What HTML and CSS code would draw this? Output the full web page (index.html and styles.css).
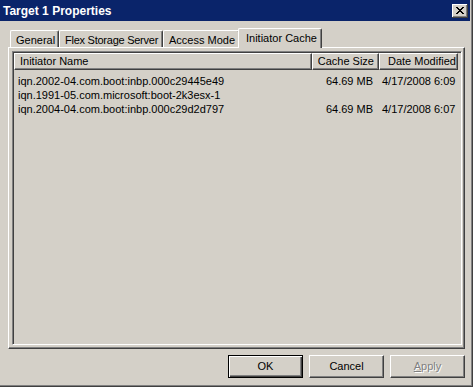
FILE: index.html
```html
<!DOCTYPE html>
<html>
<head>
<meta charset="utf-8">
<link rel="stylesheet" href="styles.css">
</head>
<body>
<div class="window">
  <div class="titlebar">
    <span class="title">Target 1 Properties</span>
    <div class="close">
      <svg width="8" height="7" viewBox="0 0 8 7" shape-rendering="crispEdges">
        <rect x="0" y="0" width="2" height="1"/><rect x="6" y="0" width="2" height="1"/>
        <rect x="1" y="1" width="2" height="1"/><rect x="5" y="1" width="2" height="1"/>
        <rect x="2" y="2" width="4" height="1"/>
        <rect x="3" y="3" width="2" height="1"/>
        <rect x="2" y="4" width="4" height="1"/>
        <rect x="1" y="5" width="2" height="1"/><rect x="5" y="5" width="2" height="1"/>
        <rect x="0" y="6" width="2" height="1"/><rect x="6" y="6" width="2" height="1"/>
      </svg>
    </div>
  </div>
  <div class="content">
    <div class="tabs">
      <div class="tab tab-general">General</div>
      <div class="tab tab-flex">Flex Storage Server</div>
      <div class="tab tab-access">Access Mode</div>
      <div class="tab tab-cache active">Initiator Cache</div>
    </div>
    <div class="panel">
      <div class="listview">
        <div class="header">
          <div class="hcell c1">Initiator Name</div>
          <div class="hcell c2">Cache Size</div>
          <div class="hcell c3">Date Modified</div>
        </div>
        <div class="rows">
          <div class="row"><span class="c1">iqn.2002-04.com.boot:inbp.000c29445e49</span><span class="c2">64.69 MB</span><span class="c3">4/17/2008 6:09</span></div>
          <div class="row"><span class="c1">iqn.1991-05.com.microsoft:boot-2k3esx-1</span><span class="c2"></span><span class="c3"></span></div>
          <div class="row"><span class="c1">iqn.2004-04.com.boot:inbp.000c29d2d797</span><span class="c2">64.69 MB</span><span class="c3">4/17/2008 6:07</span></div>
        </div>
      </div>
    </div>
    <div class="buttons">
      <div class="btn default">OK</div>
      <div class="btn">Cancel</div>
      <div class="btn disabled"><span><u>A</u>pply</span></div>
    </div>
  </div>
</div>
</body>
</html>
```
FILE: styles.css
```css
* { box-sizing: border-box; }
html, body { margin: 0; padding: 0; }
body {
  width: 473px;
  height: 387px;
  overflow: hidden;
  background: #d4d0c8;
  font-family: "Liberation Sans", Arial, sans-serif;
  font-size: 11px;
  color: #000;
}
.window {
  width: 473px;
  height: 387px;
  display: flex;
  flex-direction: column;
  background: #d4d0c8;
  box-shadow: inset -1px -1px 0 #404040, inset -2px -2px 0 #808080;
}
.titlebar {
  width: 470px;
  height: 21px;
  flex: none;
  background: #0a246a;
  display: flex;
  align-items: center;
  justify-content: space-between;
  padding: 1px 2px 0 3px;
}
.title {
  color: #fff;
  font-weight: bold;
  font-size: 12px;
  white-space: nowrap;
}
.close {
  width: 16px;
  height: 14px;
  background: #d4d0c8;
  box-shadow: inset -1px -1px 0 #404040, inset 1px 1px 0 #fff, inset -2px -2px 0 #808080;
  display: flex;
  align-items: center;
  justify-content: center;
  padding-bottom: 1px;
}
.close svg { display: block; fill: #000; }
.content {
  flex: 1;
  display: flex;
  flex-direction: column;
  padding: 0 8px;
}
.tabs {
  height: 19px;
  margin-top: 7px;
  padding-left: 2px;
  display: flex;
  align-items: flex-end;
  position: relative;
  z-index: 1;
}
.tab {
  height: 17px;
  border-left: 1px solid #fff;
  border-top: 1px solid #fff;
  border-right: 1px solid #404040;
  border-radius: 2px 2px 0 0;
  box-shadow: inset -1px 0 0 #808080;
  padding: 2px 0 0 5px;
  line-height: 14px;
  white-space: nowrap;
  overflow: hidden;
  background: #d4d0c8;
}
.tab-general { width: 49px; }
.tab-flex { width: 104px; letter-spacing: -0.25px; }
.tab-access { width: 77px; }
.tab-cache { width: 80px; }
.tab.active {
  width: 84px;
  height: 20px;
  margin: 0 -2px -1px -2px;
  padding-left: 7px;
  position: relative;
  z-index: 2;
}
.panel {
  width: 457px;
  height: 302px;
  flex: none;
  border-top: 1px solid #fff;
  border-left: 1px solid #fff;
  border-right: 1px solid #404040;
  border-bottom: 1px solid #404040;
  box-shadow: inset -1px -1px 0 #808080;
  padding: 3px 2px 3px 3px;
}
.listview {
  width: 450px;
  height: 294px;
  border: 1px solid;
  border-color: #808080 #fff #fff #808080;
  box-shadow: inset 1px 1px 0 #404040;
  padding: 1px;
  display: flex;
  flex-direction: column;
}
.header {
  display: flex;
  height: 17px;
  flex: none;
}
.hcell {
  height: 17px;
  border-left: 1px solid #fff;
  border-top: 1px solid #fff;
  border-right: 1px solid #404040;
  border-bottom: 1px solid #404040;
  box-shadow: inset -1px -1px 0 #808080;
  line-height: 15px;
  white-space: nowrap;
}
.hcell.c1 { width: 298px; padding-left: 5px; }
.hcell.c2 { width: 67px; text-align: right; padding-right: 4px; }
.hcell.c3 { width: 79px; padding-left: 8px; }
.rows { padding-top: 4px; }
.row {
  display: flex;
  height: 14px;
  line-height: 14px;
  white-space: nowrap;
}
.row .c1 { width: 298px; padding-left: 4px; }
.row .c2 { width: 67px; text-align: right; padding-right: 6px; }
.row .c3 { width: 79px; padding-left: 3px; }
.buttons {
  margin-top: 6px;
  display: flex;
  justify-content: flex-end;
  gap: 6px;
}
.btn {
  width: 75px;
  height: 23px;
  background: #d4d0c8;
  border: 1px solid;
  border-color: #fff #404040 #404040 #fff;
  box-shadow: inset -1px -1px 0 #808080;
  display: flex;
  align-items: center;
  justify-content: center;
  padding-bottom: 1px;
}
.btn.default {
  border: 1px solid #000;
  box-shadow: inset 1px 1px 0 #fff, inset -1px -1px 0 #404040, inset -2px -2px 0 #808080;
}
.btn.disabled {
  color: #808080;
  text-shadow: 1px 1px 0 #fff;
}
```
